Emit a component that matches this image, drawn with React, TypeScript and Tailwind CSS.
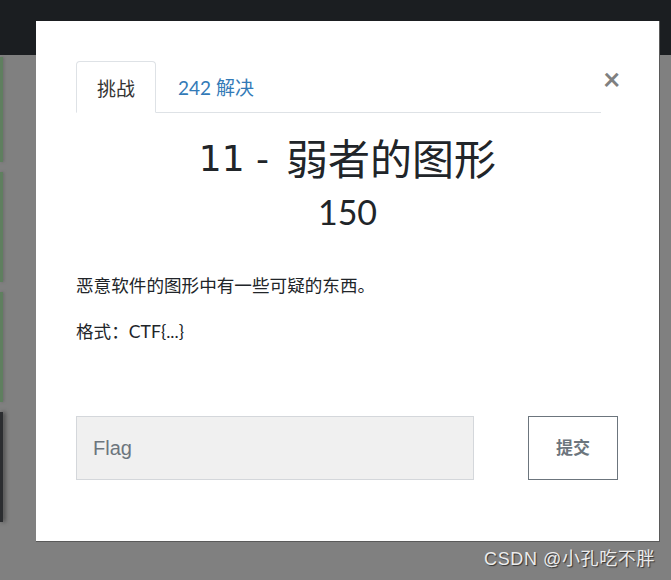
import { useState } from 'react'

const font = { fontFamily: 'Lato, "Noto Sans CJK SC", sans-serif' }

function Backdrop() {
  // page behind the modal, dimmed
  return (
    <div className="flex flex-col">
      <div className="h-[55px] bg-[#1b1e21]" />
      <div className="flex flex-col gap-[10px] pt-[2px]">
        <div className="h-[105px] w-[3px] bg-[#5f7f5f] shadow-[1px_0_3px_#6a6a6a]" />
        <div className="h-[110px] w-[3px] bg-[#5f7f5f] shadow-[1px_0_3px_#6a6a6a]" />
        <div className="h-[110px] w-[3px] bg-[#5f7f5f] shadow-[1px_0_3px_#6a6a6a]" />
        <div className="h-[110px] w-[3px] bg-[#2b2d30] shadow-[2px_0_4px_#3a3a3a]" />
      </div>
    </div>
  )
}

export default function App() {
  const [flag, setFlag] = useState('')

  return (
    <div className="relative h-[580px] w-full overflow-hidden bg-[#808080]" style={font}>
      <Backdrop />

      <div className="absolute left-[36px] top-[21px] h-[521px] w-[624px] border-b border-r border-[#5a5a5a] bg-white px-[40px] pt-[40px] text-[#212529]">
        <div className="flex items-start">
          <div className="flex flex-1 border-b border-[#dee2e6]">
            <button className="-mb-px h-[52px] rounded-t border border-b-white border-[#dee2e6] px-[20px] pt-[4px] text-[19px] text-[#333]">
              挑战
            </button>
            <button className="h-[51px] px-[22px] pt-[4px] text-[19px] text-[#337ab7]">242 解决</button>
          </div>
          <button className="ml-[2px] mt-[2px] w-[16px] text-[30px] font-bold leading-none text-[#808080]">×</button>
        </div>

        <h3 className="mt-[24px] flex items-center justify-center text-[36px] leading-[44px]">
          <span style={{ fontFamily: '"DejaVu Sans", sans-serif' }}>11 - </span>
          <span className="ml-[17px] text-[42px]">弱者的图形</span>
        </h3>
        <h4 className="mt-[11px] text-center text-[34px] leading-[40px]">150</h4>

        <p className="mt-[42px] text-[17.6px] leading-[24px]">恶意软件的图形中有一些可疑的东西。</p>
        <p className="mt-[22px] text-[17.6px] leading-[24px]">格式：CTF{'{...}'}</p>

        <div className="mt-[72px] flex items-center justify-between">
          <input
            value={flag}
            onChange={e => setFlag(e.target.value)}
            placeholder="Flag"
            className="h-[64px] w-[398px] border border-[#d4d7db] bg-[#f0f0f0] px-[16px] text-[20px] text-[#555] outline-none placeholder:text-[#6c757d]"
            style={{ fontFamily: '"Liberation Sans", Arial, sans-serif' }}
          />
          <button className="mr-[1px] h-[64px] w-[90px] border border-[#6c757d] bg-white text-[17px] font-bold text-[#6c757d]">
            提交
          </button>
        </div>
      </div>

      <div
        className="absolute bottom-[7px] right-[16px] text-[18px] tracking-[0.6px] text-[#ececec] [text-shadow:1px_1px_1px_#333]"
        style={{ fontFamily: '"Liberation Sans", "Noto Sans CJK SC", sans-serif' }}
      >
        CSDN @小孔吃不胖
      </div>
    </div>
  )
}
